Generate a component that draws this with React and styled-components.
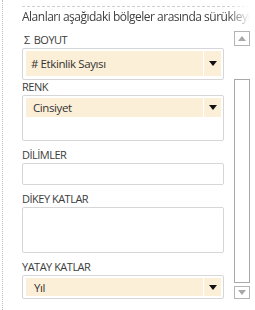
import React from "react";
import styled, { createGlobalStyle } from "styled-components";

const GlobalStyle = createGlobalStyle`
  html, body {
    margin: 0;
    padding: 0;
    background: #ffffff;
  }
  body {
    font-family: "Open Sans", "Noto Sans", sans-serif;
    color: #444444;
  }
`;

const Frame = styled.div`
  box-sizing: border-box;
  width: 255px;
  height: 310px;
  margin-left: 2px;
  padding: 6px 0 0 19px;
  border-left: 1px dotted #bdbdbd;
  overflow: hidden;
`;

const Hint = styled.div`
  width: 228px;
  border-top: 1px dashed #d0d0d0;
  padding-top: 2px;
  font-size: 12px;
  line-height: 15px;
  letter-spacing: -0.5px;
  white-space: nowrap;
  overflow: hidden;
  color: #3f3f3f;
  -webkit-mask-image: linear-gradient(to right, #000 90%, transparent 100%);
  mask-image: linear-gradient(to right, #000 90%, transparent 100%);
`;

const Body = styled.div`
  display: flex;
  margin-top: 6px;
`;

const Areas = styled.div`
  width: 202px;
  display: flex;
  flex-direction: column;
`;

const Label = styled.div`
  margin-top: ${(p) => p.$top}px;
  padding-left: ${(p) => p.$indent || 0}px;
  font-size: 11px;
  line-height: 13px;
  letter-spacing: -0.5px;
  color: #3c3c3c;
  text-transform: uppercase;
`;

const Sigma = styled.span`
  margin-right: 4px;
`;

const Zone = styled.div`
  box-sizing: border-box;
  margin-top: 2px;
  height: ${(p) => p.$h}px;
  padding: 2px 2px 2px 3px;
  border: 1px solid #d6d6d6;
  border-radius: 2px;
`;

const Field = styled.div`
  display: flex;
  align-items: stretch;
  height: ${(p) => p.$h}px;
  background: #fcefd8;
`;

const FieldName = styled.div`
  flex: 1;
  display: flex;
  align-items: center;
  padding-left: ${(p) => p.$pad}px;
  font-size: 11.5px;
  letter-spacing: -0.4px;
  color: #333333;
  white-space: nowrap;
`;

const Caret = styled.div`
  width: 17px;
  border-left: 1px solid #ffffff;
  display: flex;
  align-items: center;
  justify-content: center;
`;

const Scroll = styled.div`
  width: 16px;
  margin-left: 10px;
  display: flex;
  flex-direction: column;
`;

const ScrollBtn = styled.div`
  box-sizing: border-box;
  height: ${(p) => p.$h}px;
  margin-top: ${(p) => p.$top}px;
  border: 1px solid #b4b4b4;
  display: flex;
  align-items: center;
  justify-content: center;
`;

const Track = styled.div`
  box-sizing: border-box;
  margin-top: 33px;
  height: 204px;
  border: 1px solid #a8a8a8;
`;

const Tri = ({ down, color }) => (
  <svg width="8" height="5" viewBox="0 0 8 5">
    <polygon
      points={down ? "0,0 8,0 4,5" : "0,5 8,5 4,0"}
      fill={color}
    />
  </svg>
);

const DropField = ({ name, h, pad }) => (
  <Field $h={h}>
    <FieldName $pad={pad}>{name}</FieldName>
    <Caret>
      <Tri down color="#111111" />
    </Caret>
  </Field>
);

export default function App() {
  return (
    <>
      <GlobalStyle />
      <Frame>
        <Hint>Alanları aşağıdaki bölgeler arasında sürükleyin</Hint>
        <Body>
          <Areas>
            <Label $top={3} $indent={2}>
              <Sigma>Σ</Sigma>BOYUT
            </Label>
            <Zone $h={32}>
              <DropField name="# Etkinlik Sayısı" h={25} pad={5} />
            </Zone>

            <Label $top={0}>RENK</Label>
            <Zone $h={46}>
              <DropField name="Cinsiyet" h={19} pad={7} />
            </Zone>

            <Label $top={7}>DİLİMLER</Label>
            <Zone $h={22} />

            <Label $top={7}>DİKEY KATLAR</Label>
            <Zone $h={46} />

            <Label $top={7}>YATAY KATLAR</Label>
            <Zone $h={24}>
              <DropField name="Yıl" h={18} pad={8} />
            </Zone>
          </Areas>

          <Scroll>
            <ScrollBtn $h={15} $top={1}>
              <Tri color="#a8a8a8" />
            </ScrollBtn>
            <Track />
            <ScrollBtn $h={13} $top={3}>
              <Tri down color="#a8a8a8" />
            </ScrollBtn>
          </Scroll>
        </Body>
      </Frame>
    </>
  );
}
